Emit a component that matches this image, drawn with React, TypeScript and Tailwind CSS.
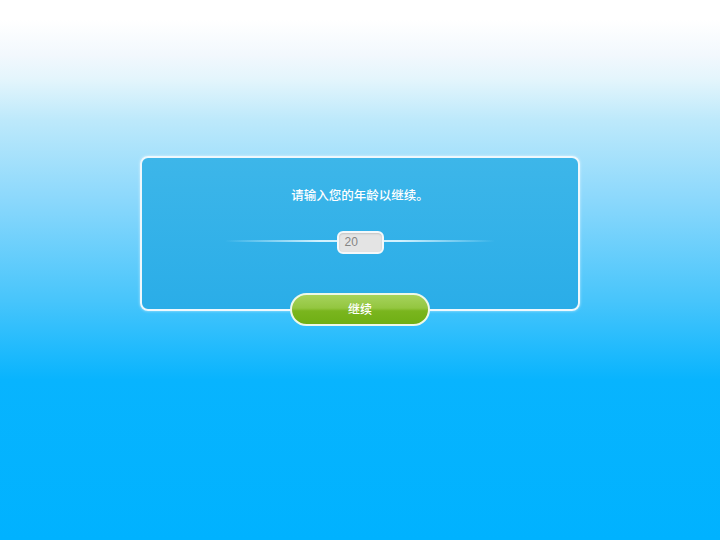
import React from 'react';

const cjk = { fontFamily: '"Liberation Sans", "Noto Sans CJK SC", sans-serif' };

export default function App() {
  return (
    <div
      className="w-[720px] h-[540px] flex flex-col items-center bg-[linear-gradient(to_bottom,#ffffff_0px,#ffffff_20px,#f2f8fd_55px,#e3f5fc_80px,#bde9fb_120px,#8bd8fc_200px,#48c5fb_300px,#08b4fe_380px,#00b2ff_540px)]"
      style={cjk}
    >
      {/* Age panel */}
      <div className="mt-[156px] relative w-[440px] h-[155px] rounded-[8px] border-2 border-[#eef8fd] bg-[linear-gradient(to_bottom,#3db6e9,#2aade8)] shadow-[0_0_3px_rgba(255,255,255,0.6)] flex flex-col items-center">
        <p className="mt-[30px] text-[12.5px] leading-[16px] font-medium text-white">请输入您的年龄以继续。</p>

        {/* Slider-ish input */}
        <div className="relative mt-[26px] w-[270px] h-[24px] flex items-center justify-center">
          <div className="absolute left-0 right-0 top-[10px] h-[2px] bg-[linear-gradient(to_right,rgba(255,255,255,0),rgba(220,245,255,0.95)_35%,rgba(220,245,255,0.95)_65%,rgba(255,255,255,0))]" />
          <div className="relative w-[47px] h-[23px] rounded-[6px] border-2 border-[#f4f8fa] bg-[#e4e4e4] shadow-[inset_0_1px_2px_rgba(0,0,0,0.15)] flex items-center pl-[6px]">
            <span className="text-[12px] text-[#858585]" style={{ fontFamily: '"Liberation Sans", sans-serif' }}>20</span>
          </div>
        </div>

        {/* Continue button overlapping bottom edge */}
        <button className="absolute left-[148px] top-[135px] w-[140px] h-[33px] rounded-full border-2 border-[#eef8e8] bg-[linear-gradient(to_bottom,#a6d35c_0%,#93c640_45%,#7ab51e_55%,#6faf14_100%)] flex items-center justify-center">
          <span className="text-[12px] font-medium text-white">继续</span>
        </button>
      </div>
    </div>
  );
}
